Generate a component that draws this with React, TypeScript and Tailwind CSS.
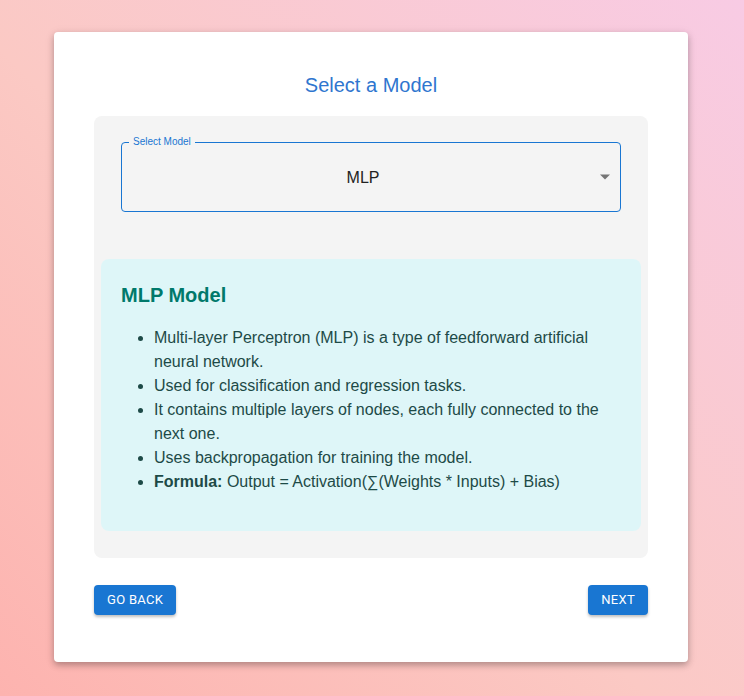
import React from "react";

const points = [
  "Multi-layer Perceptron (MLP) is a type of feedforward artificial neural network.",
  "Used for classification and regression tasks.",
  "It contains multiple layers of nodes, each fully connected to the next one.",
  "Uses backpropagation for training the model.",
];

const App = () => {
  return (
    <div className="min-h-[696px] w-full bg-[linear-gradient(45deg,#fdb3af_0%,#fbc9c4_45%,#f8cbe4_100%)] pt-8 font-['Liberation_Sans',Arial,sans-serif]">
      <div className="ml-[54px] flex w-[634px] flex-col rounded bg-white px-10 pb-[47px] pt-[40px] shadow-[0_3px_6px_rgba(0,0,0,0.25),0_2px_12px_rgba(0,0,0,0.08)]">
        <h2 className="text-center text-[20px] leading-[26px] text-[#2f76cf]">Select a Model</h2>

        <div className="mt-[18px] rounded-lg bg-[#f4f4f4] px-[7px] pb-[27px] pt-[26px]">
          {/* outlined select */}
          <div className="relative mx-5 flex h-[70px] items-center justify-center rounded border border-[#1976d2] pr-[16px] pt-[2px]">
            <span className="absolute -top-[7px] left-[7px] bg-[#f4f4f4] px-[4px] text-[10px] leading-[12px] text-[#1976d2]">
              Select Model
            </span>
            <span className="text-[16px] text-[#222]">MLP</span>
            <svg className="absolute right-[10px] top-[31px]" width="10" height="6" viewBox="0 0 10 5">
              <path d="M0 0 L10 0 L5 5 Z" fill="#757575" />
            </svg>
          </div>

          <div className="mt-[47px] rounded-lg bg-[#def6f8] px-5 pb-[37px] pt-[24px]">
            <h3 className="text-[20px] font-bold leading-[24px] text-[#00796b]">MLP Model</h3>
            <ul className="mt-[19px] list-disc pl-[33px] text-[16px] leading-[24px] text-[#1d4a47] marker:text-[#1d4a47]">
              {points.map((p) => (
                <li key={p}>{p}</li>
              ))}
              <li>
                <b>Formula:</b> Output = Activation(∑(Weights * Inputs) + Bias)
              </li>
            </ul>
          </div>
        </div>

        <div className="mt-[27px] flex justify-between font-['Roboto',sans-serif]">
          <button className="h-[30px] rounded bg-[#1976d2] px-[13px] text-[13px] font-normal uppercase tracking-[0.3px] text-white shadow-[0_2px_3px_rgba(0,0,0,0.25)]">
            Go Back
          </button>
          <button className="h-[30px] rounded bg-[#1976d2] px-[13px] text-[13px] font-normal uppercase tracking-[0.3px] text-white shadow-[0_2px_3px_rgba(0,0,0,0.25)]">
            Next
          </button>
        </div>
      </div>
    </div>
  );
};

export default App;
